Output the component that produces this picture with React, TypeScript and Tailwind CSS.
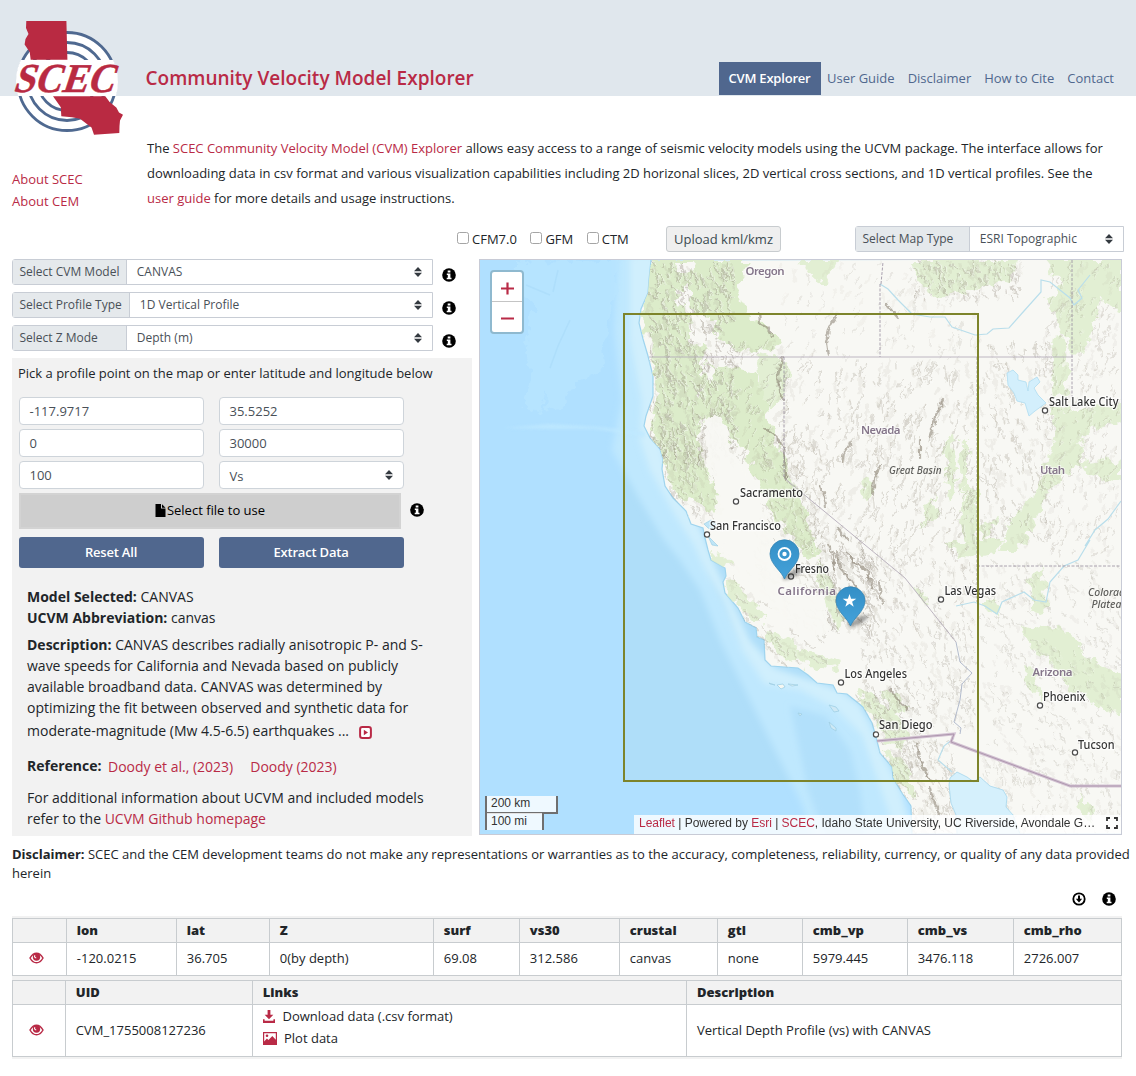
import React from "react";

const NAV = ["User Guide", "Disclaimer", "How to Cite", "Contact"];

/* ---------- icons ---------- */

function InfoIcon({ className = "" }: { className?: string }) {
  return (
    <svg viewBox="0 0 14 14" className={`block size-[14px] shrink-0 ${className}`}>
      <circle cx="7" cy="7" r="6.8" fill="#000" />
      <path d="M5.7 2.4h2.7v2H5.7zM4.8 5.5h3.6v4.3h1.1v1.5H4.7V9.8h1.1V7H4.8z" fill="#fff" />
    </svg>
  );
}

function DownIcon() {
  return (
    <svg viewBox="0 0 14 14" className="block size-[14px]">
      <circle cx="7" cy="7" r="5.7" fill="none" stroke="#000" strokeWidth="1.8" />
      <path d="M6 3.5h2v3.2h2.2L7 10.6 3.8 6.7H6z" fill="#000" />
    </svg>
  );
}

function EyeIcon() {
  return (
    <svg viewBox="0 0 15 12" className="mx-auto block h-[12px] w-[15px]">
      <path d="M1 6C2.8 2.8 5 1.2 7.5 1.2S12.2 2.8 14 6c-1.8 3.2-4 4.8-6.5 4.8S2.8 9.2 1 6z" fill="#fff" stroke="#b92a46" strokeWidth="1.5" />
      <circle cx="7.5" cy="5" r="3.7" fill="#b92a46" />
      <path d="M5.9 3.2c-.8 1.3-.1 2.600 1.300 2.700" fill="none" stroke="#fff" strokeWidth="1.1" />
    </svg>
  );
}

function DownloadIcon() {
  return (
    <svg viewBox="0 0 12 13" className="block h-[13px] w-[12px]" fill="#b92a46">
      <path d="M4.6 0h2.8v4.800h2.900L6 9.300 1.700 4.800h2.900z" />
      <path d="M0 9.200h1.600v1.600h8.800V9.200H12V13H0z" />
    </svg>
  );
}

function PictureIcon() {
  return (
    <svg viewBox="0 0 14 13" className="block h-[13px] w-[14px]">
      <path fillRule="evenodd" d="M0 0h14v13H0zM1.200 1.200v8.300l2.700-3 1.600 1.400L9.300 4l3.500 3.800V1.200z" fill="#b92a46" />
      <circle cx="4" cy="3.8" r="1.3" fill="#b92a46" />
    </svg>
  );
}

function PlayBoxIcon() {
  return (
    <svg viewBox="0 0 13 13" className="ml-[6px] inline-block size-[13px] align-[-2.5px]">
      <rect x="1.1" y="1.1" width="10.8" height="10.8" rx="2.2" fill="#fff" stroke="#b92a46" strokeWidth="2" />
      <path d="M4.8 3.8v5.400L9 6.500z" fill="#b92a46" />
    </svg>
  );
}

function FileIcon() {
  return (
    <svg viewBox="0 0 11 13" className="mr-[1px] block h-[13px] w-[11px]">
      <path d="M.5 0H6v4.600h4.500V13H.5z" fill="#000" />
      <path d="M7 .3l3.500 3.400H7z" fill="#000" />
    </svg>
  );
}

function Caret() {
  return (
    <svg viewBox="0 0 8 10" className="block h-[10px] w-[8px]" fill="#343a40">
      <path d="M4 0l4 4.200H0zM4 10l4-4.200H0z" />
    </svg>
  );
}

function Logo() {
  return (
    <svg viewBox="0 0 122 126" className="absolute top-[14px] left-[8px] h-[126px] w-[122px]">
      <defs>
        <clipPath id="disc"><circle cx="59" cy="67.5" r="51" /></clipPath>
      </defs>
      <circle cx="59" cy="67.5" r="49" fill="#fff" />
      <g fill="none" stroke="#4f6990" strokeWidth="2.8">
        <circle cx="59" cy="67.5" r="49" />
        <circle cx="59" cy="67.5" r="39" />
        <circle cx="59" cy="67.5" r="29" />
      </g>
      <rect x="7" y="46" width="104" height="36" fill="#fff" clipPath="url(#disc)" />
      <path d="M18.300 7H58.400L59.400 45.700H22.700L21.700 38 16.600 30.500 17.500 25 20.500 20 18 14z" fill="#b92a42" />
      <path d="M45 82.300H97.300L101.600 88 108.300 93.500 111 98.500 115 100.700 112 106.500 111.500 112 111.300 119 86 120.800 83.500 113.500 72 104.800 64 103.200 53.300 102.300 52.800 93.300z" fill="#b92a42" />
      <text transform="translate(4.5 77.6) skewX(-18)" textLength="101" lengthAdjust="spacingAndGlyphs" fontFamily="'Liberation Serif', serif" fontWeight="700" fontSize="41" fill="#b92a42" stroke="#b92a42" strokeWidth=".5">
        SCEC
      </text>
    </svg>
  );
}

/* ---------- map ---------- */

const COAST =
  "L651 260 649 280 648 293 641 309 639 323 643 339 648 356 653 376 653 396 646 416 644 426 650 438 660 449 663 459 662 469 665 486 673 498 686 511 691 524 703 528 705 538 708 550 711 560 725 568 726 576 723 582 725 593 738 608 745 622 756 628 757 637 764 640 765 660 771 666 798 668 808 675 817 683 833 685 837 693 847 694 863 707 872 723 876 737 880 753 892 767 893 778 902 793 911 806 912 834";
const LAND = `M1122 259 ${COAST} L1122 834z`;
const SEA = `M480 259 ${COAST} L480 834z`;

const GREENS: string[] = [
  "M649 259 690 259 688 280 680 290 684 312 694 332 712 350 700 358 706 375 698 392 708 408 697 425 700 450 706 470 715 492 722 514 706 508 690 496 680 498 668 486 664 462 652 440 648 425 655 404 654 376 649 352 643 326 641 308z",
  "M688 259 748 259 738 290 748 315 772 330 778 345 752 350 728 344 714 334 716 318 700 318 688 300z",
  "M706 362 734 368 756 374 764 396 768 420 774 440 782 455 790 478 800 500 808 525 816 548 808 560 796 540 780 524 770 508 762 486 750 466 744 450 730 440 724 424 706 420 700 396z",
  "M757 352 778 356 790 372 780 400 768 410 758 384z",
  "M709 552 718 553 730 564 722 568 712 562z",
  "M724 582 734 580 744 592 756 606 764 620 752 618 738 606 728 596z",
  "M764 630 778 632 794 644 812 650 838 660 832 668 808 666 790 660 772 648z",
  "M815 560 826 570 832 588 842 612 838 626 828 616 824 594 814 576z",
  "M858 690 872 694 884 706 900 718 908 736 902 748 888 742 876 724 862 704z",
  "M882 690 896 690 904 706 896 716 886 704z",
  "M885 748 898 756 908 776 918 798 904 790 892 770z",
  "M908 259 1018 259 1010 276 992 286 964 290 940 296 920 286z",
  "M800 259 838 259 826 282 804 272z",
  "M1042 259 1121 259 1121 310 1098 298 1092 330 1084 352 1070 350 1060 322 1046 300 1062 282z",
  "M1052 335 1062 334 1068 372 1066 392 1050 400 1048 372z",
  "M1050 406 1078 410 1121 404 1121 420 1090 430 1078 444 1084 462 1121 458 1121 484 1096 476 1076 462 1058 480 1044 492 1036 520 1018 548 1000 548 1010 520 1034 494 1044 464 1054 440z",
  "M944 440 952 432 956 470 948 500 944 470z",
  "M958 442 966 440 966 480 960 500z",
  "M862 476 868 474 874 496 866 500z",
  "M924 508 934 498 936 512 920 528z",
  "M966 480 977 488 976 540 966 542 958 520z",
  "M978 524 994 520 986 542z",
  "M944 540 1002 540 996 552 960 556z",
  "M1026 582 1040 566 1044 590 1048 606 1034 612z",
  "M1020 622 1038 630 1058 624 1076 640 1090 660 1121 674 1121 716 1098 704 1070 690 1046 656 1024 640z",
  "M984 596 1000 604 994 618 984 606z",
  "M914 586 926 592 930 604 920 600z",
  "M1076 790 1088 806 1094 824 1084 818z",
  "M1024 662 1034 672 1040 700 1026 684z",
];

type Relief = { x: number; y: number; w: number; h: number; n: number; angle: number; len: number; seed: number; dark: number };

const RELIEF: Relief[] = [
  { x: 648, y: 262, w: 85, h: 200, n: 380, angle: 1.2, len: 8, seed: 3, dark: 0.3 },
  { x: 664, y: 440, w: 50, h: 80, n: 80, angle: 1.15, len: 9, seed: 8, dark: 0.24 },
  { x: 700, y: 340, w: 90, h: 120, n: 90, angle: 2.1, len: 8, seed: 12, dark: 0.24 },
  { x: 755, y: 440, w: 65, h: 130, n: 110, angle: 1, len: 9, seed: 15, dark: 0.22 },
  { x: 785, y: 360, w: 190, h: 190, n: 340, angle: 1.85, len: 10, seed: 22, dark: 0.22 },
  { x: 780, y: 262, w: 200, h: 95, n: 90, angle: 1.9, len: 8, seed: 29, dark: 0.13 },
  { x: 910, y: 260, w: 110, h: 35, n: 90, angle: 1.2, len: 6, seed: 31, dark: 0.26 },
  { x: 980, y: 340, w: 75, h: 200, n: 160, angle: 1.3, len: 8, seed: 37, dark: 0.22 },
  { x: 1045, y: 262, w: 74, h: 290, n: 220, angle: 1.9, len: 7, seed: 41, dark: 0.18 },
  { x: 724, y: 560, w: 100, h: 105, n: 80, angle: 0.85, len: 11, seed: 47, dark: 0.22 },
  { x: 820, y: 540, w: 55, h: 85, n: 80, angle: 1.15, len: 13, seed: 53, dark: 0.32 },
  { x: 860, y: 550, w: 115, h: 180, n: 260, angle: 1.3, len: 7, seed: 59, dark: 0.2 },
  { x: 856, y: 685, w: 60, h: 90, n: 90, angle: 1, len: 8, seed: 61, dark: 0.24 },
  { x: 980, y: 560, w: 140, h: 225, n: 300, angle: 1, len: 6, seed: 67, dark: 0.17 },
  { x: 895, y: 740, w: 60, h: 92, n: 80, angle: 1.1, len: 9, seed: 71, dark: 0.22 },
  { x: 990, y: 760, w: 130, h: 74, n: 80, angle: 1.3, len: 6, seed: 79, dark: 0.16 },
];

function reliefPath(r: Relief, offset: number): string {
  let s = r.seed * 7919 + 17;
  const rnd = () => {
    s = (s * 16807) % 2147483647;
    return s / 2147483647;
  };
  let d = "";
  for (let i = 0; i < r.n; i++) {
    const x = r.x + rnd() * r.w;
    const y = r.y + rnd() * r.h;
    const a = r.angle + (rnd() - 0.5) * 0.9;
    const l = r.len * (0.35 + rnd());
    const bend = (rnd() - 0.5) * 5;
    const ex = x + Math.cos(a) * l;
    const ey = y + Math.sin(a) * l;
    d += `M${(x + offset).toFixed(1)} ${y.toFixed(1)}Q${((x + ex) / 2 + bend + offset).toFixed(1)} ${((y + ey) / 2 - bend).toFixed(1)} ${(ex + offset).toFixed(1)} ${ey.toFixed(1)}`;
  }
  return d;
}

const RIDGES = [
  "M838 314 830 326 826 342 828 356",
  "M759 312 760 324 768 328 772 336",
  "M782 358 778 376 780 392 784 400",
  "M943 400 936 416 929 438",
  "M852 442 844 452 842 462",
  "M920 440 920 458",
  "M880 466 874 478 873 494",
  "M820 486 824 496 826 506",
  "M836 552 840 568 850 580 858 590",
  "M828 545 834 556 834 570",
  "M847 552 854 562 868 572 872 588",
  "M879 582 882 604",
  "M916 744 922 764 930 780",
  "M890 690 900 702 908 710",
  "M930 788 934 802 940 814",
  "M848 540 842 534 838 528",
  "M886 304 898 318",
  "M764 428 776 436 784 448 786 480",
];

const CITIES: { name: string; x: number; y: number; tx: number; ty: number; w: number }[] = [
  { name: "Sacramento", x: 736, y: 501.5, tx: 740, ty: 497, w: 63 },
  { name: "San Francisco", x: 707, y: 534.5, tx: 710, ty: 529.5, w: 71 },
  { name: "Fresno", x: 791, y: 576.5, tx: 795, ty: 572.5, w: 34 },
  { name: "Las Vegas", x: 941, y: 599.5, tx: 944.5, ty: 594.5, w: 51.5 },
  { name: "Los Angeles", x: 841, y: 682.5, tx: 844.5, ty: 678, w: 62.5 },
  { name: "San Diego", x: 876, y: 734.5, tx: 879, ty: 729, w: 53.5 },
  { name: "Phoenix", x: 1040, y: 705.5, tx: 1043, ty: 701, w: 42.5 },
  { name: "Tucson", x: 1075, y: 752.5, tx: 1078, ty: 748.5, w: 36.5 },
  { name: "Salt Lake City", x: 1045, y: 410.5, tx: 1049, ty: 405.5, w: 69.5 },
];

const REGIONS: { name: string; x: number; y: number; w: number }[] = [
  { name: "Oregon", x: 745.5, y: 275, w: 39 },
  { name: "Nevada", x: 861, y: 433.5, w: 39.5 },
  { name: "Utah", x: 1040, y: 473.5, w: 25 },
  { name: "California", x: 777.5, y: 595, w: 58.5 },
  { name: "Arizona", x: 1032.5, y: 676, w: 40 },
];

function Pin({ x, y, children }: { x: number; y: number; children: React.ReactNode }) {
  return (
    <g transform={`translate(${x} ${y})`}>
      <ellipse cx="8" cy="-5" rx="11" ry="3.2" transform="rotate(-28 8 -5)" fill="#222" opacity=".4" filter="url(#soft)" />
      <path d="M0 0C-3-8-14.500-15-14.500-25.200A14.500 14 0 0 1 14.500-25.200C14.500-15 3-8 0 0z" fill="url(#pin)" stroke="#3484b4" strokeWidth=".8" />
      {children}
    </g>
  );
}

function MapDrawing() {
  return (
    <svg viewBox="480 260 641 574" className="block h-full w-full">
      <defs>
        <clipPath id="land"><path d={LAND} /></clipPath>
        <clipPath id="sea"><path d={SEA} /></clipPath>
        <filter id="rough" x="-5%" y="-5%" width="110%" height="110%">
          <feTurbulence type="fractalNoise" baseFrequency="0.09" numOctaves="3" seed="4" />
          <feDisplacementMap in="SourceGraphic" scale="17" xChannelSelector="R" yChannelSelector="G" />
        </filter>
        <filter id="wobble" x="-5%" y="-5%" width="110%" height="110%">
          <feTurbulence type="fractalNoise" baseFrequency="0.2" numOctaves="2" seed="9" />
          <feDisplacementMap in="SourceGraphic" scale="6" xChannelSelector="R" yChannelSelector="G" />
          <feGaussianBlur stdDeviation=".5" />
        </filter>
        <filter id="soft" x="-50%" y="-80%" width="200%" height="260%"><feGaussianBlur stdDeviation="1.6" /></filter>
        <filter id="shelf" x="-10%" y="-10%" width="120%" height="120%"><feGaussianBlur stdDeviation="3" /></filter>
        <linearGradient id="pin" x1="0" y1="0" x2="0" y2="1">
          <stop offset="0" stopColor="#348fc6" />
          <stop offset="1" stopColor="#44a2da" />
        </linearGradient>
      </defs>

      <rect x="480" y="260" width="641" height="574" fill="#b0e0ff" />
      <g clipPath="url(#sea)">
        <rect x="624" y="314" width="354" height="467" fill="#afdef9" />
        <path d="M618 256H660V450L700 540 712 580 740 640 770 680 820 690 870 720 920 840H815L800 800 770 740 745 690 720 640 700 590 680 560 664 540 640 500 612 450 622 400 614 330z" fill="#bfe8fe" filter="url(#shelf)" />
        <path d="M790 706 826 716 850 750 860 790 866 840H826L808 790z" fill="#b2e0fb" filter="url(#shelf)" />
        <path d="M630 256H656V330L660 440 668 480 700 528 715 565 750 640 775 668 840 690 860 705 880 750 900 790 912 840H898L876 775 862 735 835 708 800 690 765 684 742 650 722 600 705 570 694 545 672 510 650 470 640 440 642 400 630 340z" fill="#d0effd" filter="url(#shelf)" />
        <path d="M514 262 540 260 620 262 614 300 604 345 606 368 580 380 558 408 546 412 548 372 556 350 552 378 540 412 522 408 530 372 526 340 534 308 520 290z" fill="#bae6ff" opacity=".7" filter="url(#rough)" />
        <path d="M504 428 550 424 600 427 645 432V437L595 429 550 429z" fill="#c0e9ff" opacity=".8" filter="url(#soft)" />
        <path d="M558 270 553 292M570 320 558 346 550 368M526 285 550 295" stroke="#a9daf8" strokeWidth="1.5" fill="none" opacity=".6" />
      </g>

      <path d={LAND} fill="#f8f8f4" stroke="#9fd4ee" strokeWidth="1.2" />
      <g clipPath="url(#land)">
        <g fill="#dcecca" filter="url(#rough)" transform="translate(1 1)">
          {GREENS.map((d, i) => (
            <path key={i} d={d} opacity={i < 3 ? 1 : 0.8} />
          ))}
        </g>
        <g fill="#f8f8f4" filter="url(#rough)">
          <path d="M676 262 692 262 690 272 678 272z" />
          <path d="M676 292 686 290 684 310 676 306z" />
          <path d="M690 332 704 336 706 348 690 344z" />
          <path d="M702 364 714 366 712 380 702 376z" />
          <path d="M718 334 728 340 726 350 718 346z" />
        </g>
        <g fill="none" strokeLinecap="round" filter="url(#wobble)">
          {RELIEF.map((r) => (
            <g key={r.seed}>
              <path d={reliefPath({ ...r, seed: r.seed + 100, n: Math.round(r.n / 2) }, 0)} stroke="#a39a8c" strokeWidth="2.8" opacity={r.dark * 0.5} />
              <path d={reliefPath(r, 1.3)} stroke="#fff" strokeWidth="1.2" opacity={r.dark * 1.2} />
              <path d={reliefPath(r, 0)} stroke="#7f7566" strokeWidth="1.3" opacity={r.dark} />
            </g>
          ))}
          {RIDGES.map((d, i) => (
            <path key={i} d={d} stroke="#7b7162" strokeWidth="2.2" opacity=".5" />
          ))}
        </g>
        <path d="M702 420 718 412 730 436 736 462 752 486 762 506 775 540 792 572 815 596 828 620 820 642 798 634 772 606 744 580 726 552 716 520 712 480z" fill="#f8f8f4" filter="url(#rough)" opacity=".95" />

        <path d="M1007 373 1013 370 1018 375 1018 380 1026 382 1028 391 1029 382 1037 377 1040 382 1034 388 1038 395 1046 403 1035 411 1029 416 1025 403 1017 401 1014 393 1008 385z" fill="#d3effc" stroke="#aedcf0" strokeWidth=".8" />
        <path d="M949 785 950 778 957 772 967 777 974 782 980 777 990 786 1003 790 1007 797 1006 807 1013 815 1020 834H957L956 815 951 803z" fill="#d5f0fc" stroke="#a5d6ec" strokeWidth=".8" />
        <path d="M704 524 711 520 716 524 712 530 708 528zM708 536 718 546 712 545z" fill="#bfe5f7" stroke="#96cae0" strokeWidth=".6" />

        <g fill="none" stroke="#b9deeb" strokeWidth="1.2">
          <path d="M880 284 888 289 898 300 912 314 930 317 945 317 952 327 975 335 987 334 993 329 1009 328 1024 311 1041 292V280L1050 282 1070 298 1074 305 1082 298 1078 290 1090 275" />
          <path d="M1121 501 1108 519 1095 530 1085 546M1090 540 1078 560 1064 566 1050 582 1046 602 1034 600 1024 592 1002 602 997 614 985 606 974 602 956 606" />
          <path d="M938 760 944 746 954 738M938 760 952 772" />
        </g>
        <g fill="none" stroke="#aea5b4" strokeWidth="1" opacity=".8">
          <path d="M649 357H1073M784 478 905 578 956 642" />
          <path d="M784 357V478M880 284V357M977 357V602M977 566H1121M1072 260V398M881 284 883 262" strokeDasharray="3 1.5" stroke="#968c9e" />
          <path d="M956 642 960 662 972 673 962 684 960 700 954 722 961 728 960 734" stroke="#a2adc4" />
        </g>
        <path d="M877 741 954 734 951 742 978 752 1070 786H1121" fill="none" stroke="#d2c1d2" strokeWidth="3" />
        <path d="M877 741 954 734 951 742 978 752 1070 786H1121" fill="none" stroke="#a58da5" strokeWidth=".8" />
      </g>

      <g fill="#f5f7f2" stroke="#9fcfe4" strokeWidth=".8">
        <path d="M769 683 775 685 770 684zM777 685 783 684 785 687 781 689zM788 684 798 685 792 686z" />
        <path d="M798 713 802 714 800 716zM829 705 836 707 839 711 834 712zM829 722 836 728 836 731 831 728z" fill="#cfe9f5" />
      </g>

      <g fontFamily="'Noto Sans', sans-serif" fontWeight="600" fontSize="11.5" fill="#85768a" stroke="#fff" strokeWidth="2" strokeOpacity=".6" paintOrder="stroke">
        {REGIONS.map((r) => (
          <text key={r.name} x={r.x} y={r.y} textLength={r.w}>{r.name}</text>
        ))}
      </g>
      <g fontFamily="'Noto Sans', sans-serif" fontStyle="italic" fontWeight="500" fontSize="11" fill="#5f5f5c">
        <text x="889" y="474" textLength="52.5" lengthAdjust="spacingAndGlyphs">Great Basin</text>
        <text x="1088" y="596" textLength="43" lengthAdjust="spacingAndGlyphs">Colorado</text>
        <text x="1091.5" y="608" textLength="36" lengthAdjust="spacingAndGlyphs">Plateau</text>
      </g>
      {CITIES.map((c) => (
        <g key={c.name}>
          <circle cx={c.x} cy={c.y} r="2.6" fill="#fff" stroke="#4b4b4b" strokeWidth="1.2" />
          <text x={c.tx} y={c.ty} textLength={c.w} lengthAdjust="spacingAndGlyphs" fontFamily="'Noto Sans', sans-serif" fontWeight="500" fontSize="12" fill="#333" stroke="#fff" strokeWidth="2.5" strokeOpacity=".75" paintOrder="stroke">
            {c.name}
          </text>
        </g>
      ))}

      <rect x="624" y="314" width="354" height="467" fill="none" stroke="#7d842b" strokeWidth="2" />

      <Pin x={784.5} y={579}>
        <circle cx="0" cy="-25" r="6" fill="none" stroke="#fff" strokeWidth="1.8" />
        <circle cx="0" cy="-25" r="2.2" fill="#fff" />
      </Pin>
      <Pin x={850.5} y={626}>
        <path d="M-1-32 .6-27.200H5.800L1.600-24.200 3.200-19.200-1-22.200-5.200-19.200-3.600-24.200-7.800-27.200H-2.600z" fill="#fff" />
      </Pin>
    </svg>
  );
}

function MapPanel() {
  return (
    <div className="relative h-[576px] w-[643px] overflow-hidden border border-[#c8cbd6]">
      <MapDrawing />
      <div className="absolute top-[10px] left-[10px] w-[34px] overflow-hidden rounded-[4px] border-2 border-[#8fb9cf] bg-white">
        <div className="grid h-[30px] place-items-center border-b border-[#c4c4c4] pt-[3px]">
          <svg viewBox="0 0 13 13" className="size-[13px]"><path d="M6.500 .5v12M0 6.500h13" stroke="#b92a46" strokeWidth="2.2" /></svg>
        </div>
        <div className="grid h-[30px] place-items-center pt-[2px]">
          <svg viewBox="0 0 13 13" className="size-[13px]"><path d="M0 6.500h13" stroke="#b92a46" strokeWidth="2" /></svg>
        </div>
      </div>
      <div className="absolute bottom-[4px] left-[5px] font-['Liberation_Sans',sans-serif] text-[12px] leading-[14px] text-[#333]">
        <div className="h-[18px] w-[73px] border-2 border-t-0 border-[#6f6f6f] bg-white/80 pl-1">200 km</div>
        <div className="-mt-[1px] h-[17px] w-[59px] border-2 border-t-0 border-b-0 border-[#6f6f6f] bg-white/80 pt-px pl-[4px]">100 mi</div>
      </div>
      <div className="absolute right-0 bottom-0 flex h-[19px] w-[487px] items-center bg-white/80 pl-[5px] font-['Liberation_Sans',sans-serif] text-[12px] whitespace-pre text-[#333]">
        <span className="w-[457px] pb-[3px] tracking-[-0.015px]">
          <span className="text-[#b92a46]">Leaflet</span> | Powered by <span className="text-[#b92a46]">Esri</span> | <span className="text-[#b92a46]">SCEC</span>, Idaho State University, UC Riverside, Avondale G…
        </span>
        <svg viewBox="0 0 12 12" className="mb-[3px] ml-[10px] size-[12px] shrink-0" fill="none" stroke="#333" strokeWidth="1.8">
          <path d="M1 4V1h3M8 1h3v3M11 8v3H8M4 11H1V8" />
        </svg>
      </div>
    </div>
  );
}

/* ---------- form pieces ---------- */

function LabeledSelect({ label, value, labelClass, width }: { label: string; value: string; labelClass: string; width: string }) {
  return (
    <div className={`flex h-[26px] rounded-l-[3px] border border-[#c8cdd5] bg-white text-[12px] text-[#495057] ${width}`}>
      <div className={`flex items-center border-r border-[#c8cdd5] bg-[#e5e9ec] pb-px pl-[6.5px] whitespace-nowrap ${labelClass}`}>{label}</div>
      <div className="flex flex-1 items-center justify-between pr-[10px] pb-px pl-[9.8px]">
        <span>{value}</span>
        <Caret />
      </div>
    </div>
  );
}

function Field({ value, select = false }: { value: string; select?: boolean }) {
  return (
    <div className="flex h-[28px] w-[185px] items-center justify-between rounded-[4px] border border-[#ced4da] bg-white pr-[10px] pl-[9.5px] text-[13px] text-[#495057]">
      <span className={select ? "pt-[3px]" : "pt-[1.5px]"}>{value}</span>
      {select && <Caret />}
    </div>
  );
}

const SELECTORS = [
  ["Select CVM Model", "CANVAS", "w-[114px]"],
  ["Select Profile Type", "1D Vertical Profile", "w-[117px]"],
  ["Select Z Mode", "Depth (m)", "w-[114px]"],
];

function Sidebar() {
  return (
    <div className="w-[467px]">
      <div className="flex flex-col gap-[7px]">
        {SELECTORS.map(([label, value, labelClass]) => (
          <div key={label} className="flex">
            <LabeledSelect label={label} value={value} labelClass={labelClass} width="w-[421px]" />
            <InfoIcon className="mt-[9px] ml-[9px]" />
          </div>
        ))}
      </div>
      <div className="mt-[7px] h-[478px] w-[460px] bg-[#f2f2f2] pl-[7px] text-[#212529]">
        <p className="-ml-[1px] pt-[5px] text-[13px] leading-[20px]">
          <span className="whitespace-nowrap">Pick a profile point on the map or enter latitude and longitude below</span>
        </p>
        <div className="mt-[14px] grid w-[385px] grid-cols-2 gap-x-[15px] gap-y-[4px]">
          <Field value="-117.9717" />
          <Field value="35.5252" />
          <Field value="0" />
          <Field value="30000" />
          <Field value="100" />
          <Field value="Vs" select />
        </div>
        <div className="mt-[4px] flex items-center">
          <div className="flex h-[36px] w-[382px] items-center justify-center border-2 border-[#d3d3d3] bg-[#cecece] pb-px text-[13px] text-black">
            <FileIcon />
            Select file to use
          </div>
          <InfoIcon className="mb-[2px] ml-[9px]" />
        </div>
        <div className="mt-[8px] flex gap-[15px] text-[13px] font-semibold tracking-[-0.2px] text-white">
          <div className="grid h-[31px] w-[185px] place-items-center rounded-[3px] bg-[#50678e] pr-px">Reset All</div>
          <div className="grid h-[31px] w-[185px] place-items-center rounded-[3px] bg-[#50678e] pr-px">Extract Data</div>
        </div>
        <div className="mt-[18px] w-[415px] pl-[8px] text-[14px] leading-[21px] whitespace-nowrap">
          <p><b>Model Selected:</b> CANVAS<br /><b>UCVM Abbreviation:</b> canvas</p>
          <p className="mt-[6px]">
            <b>Description:</b> CANVAS describes radially anisotropic P- and S-<br />
            wave speeds for California and Nevada based on publicly<br />
            available broadband data. CANVAS was determined by<br />
            optimizing the fit between observed and synthetic data for
          </p>
          <p className="mt-[2px]">moderate-magnitude (Mw 4.5-6.5) earthquakes ... <PlayBoxIcon /></p>
          <p className="mt-[14px] flex">
            <b>Reference:</b>
            <span className="ml-[6.5px] pt-px text-[#b92a46]">Doody et al., (2023)</span>
            <span className="ml-[17px] pt-px text-[#b92a46]">Doody (2023)</span>
          </p>
          <p className="mt-[10px]">
            For additional information about UCVM and included models<br />
            refer to the <span className="text-[#b92a46]">UCVM Github homepage</span>
          </p>
        </div>
      </div>
    </div>
  );
}

/* ---------- tables ---------- */

const POINT_COLS = [
  ["", "", "w-[54px]"],
  ["lon", "-120.0215", "w-[110px]"],
  ["lat", "36.705", "w-[93px]"],
  ["Z", "0(by depth)", "w-[164px]"],
  ["surf", "69.08", "w-[86px]"],
  ["vs30", "312.586", "w-[100px]"],
  ["crustal", "canvas", "w-[98px]"],
  ["gtl", "none", "w-[85px]"],
  ["cmb_vp", "5979.445", "w-[105px]"],
  ["cmb_vs", "3476.118", "w-[106px]"],
  ["cmb_rho", "2726.007", "w-[108px]"],
];

const CELL = "border-r border-[#c8cccf]";

function Results() {
  return (
    <div className="mx-[12px] w-[1110px] bg-[#f2f2f2] pt-[2px] pb-[2px] text-[13px] text-[#212529]">
      <div className="border border-r-0 border-[#c8cccf]">
        <div className="flex h-[24px] border-b border-[#c8cccf] font-extrabold">
          {POINT_COLS.map(([h, , w], i) => (
            <div key={i} className={`${CELL} ${w} shrink-0 pl-[9.8px] leading-[22px]`}>{h}</div>
          ))}
        </div>
        <div className="flex h-[32px] bg-white">
          {POINT_COLS.map(([, v, w], i) => (
            <div key={i} className={`${CELL} ${w} flex shrink-0 items-center ${i ? "pb-px pl-[9.8px]" : "pr-[7px] pb-[2px]"}`}>{i ? v : <EyeIcon />}</div>
          ))}
        </div>
      </div>
      <div className="mt-[4px] border border-r-0 border-[#c8cccf]">
        <div className="flex h-[24px] border-b border-[#c8cccf] leading-[22px] font-extrabold">
          <div className={`${CELL} w-[53px]`} />
          <div className={`${CELL} w-[187px] pl-[9.8px]`}>UID</div>
          <div className={`${CELL} w-[434px] pl-[9.8px]`}>Links</div>
          <div className={`${CELL} w-[435px] pl-[10px]`}>Description</div>
        </div>
        <div className="flex h-[51px] bg-white">
          <div className={`${CELL} flex w-[53px] items-center pr-[6px] pb-[2px]`}><EyeIcon /></div>
          <div className={`${CELL} flex w-[187px] items-center pl-[9.8px]`}>CVM_1755008127236</div>
          <div className={`${CELL} w-[434px] pl-[10px] leading-[22px]`}>
            <div className="flex items-center"><DownloadIcon /><span className="ml-[7.5px]">Download data (.csv format)</span></div>
            <div className="flex items-center"><PictureIcon /><span className="ml-[7px]">Plot data</span></div>
          </div>
          <div className={`${CELL} flex w-[435px] items-center pl-[10px]`}>Vertical Depth Profile (vs) with CANVAS</div>
        </div>
      </div>
    </div>
  );
}

/* ---------- page ---------- */

export default function App() {
  return (
    <div className="min-h-[1076px] w-[1136px] overflow-hidden bg-white font-['Open_Sans',sans-serif] text-[13px] text-[#212529]">
      <header className="relative flex h-[96px] items-end bg-[#e0e7ed] pl-[145.5px]">
        <Logo />
        <h1 className="mb-[5px] text-[19px] leading-[26px] font-semibold whitespace-nowrap text-[#b92a46]">Community Velocity Model Explorer</h1>
        <nav className="mr-[22px] mb-px ml-auto flex h-[33px] items-center whitespace-nowrap text-[#50678e]">
          <span className="mr-[6.5px] grid h-[33px] w-[102px] place-items-center bg-[#50678e] font-semibold tracking-[-0.2px] text-white">CVM Explorer</span>
          <span className="flex gap-[13px]">
            {NAV.map((n) => <span key={n}>{n}</span>)}
          </span>
        </nav>
      </header>

      <div className="flex h-[130px] pt-[40px]">
        <div className="w-[147px] pt-[32px] pl-[12px] leading-[22px] text-[#b92a46]">
          <div>About SCEC</div>
          <div>About CEM</div>
        </div>
        <p className="leading-[25px] whitespace-nowrap">
          The <span className="text-[#b92a46]">SCEC Community Velocity Model (CVM) Explorer</span> allows easy access to a range of seismic velocity models using the UCVM package. The interface allows for<br />
          downloading data in csv format and various visualization capabilities including 2D horizonal slices, 2D vertical cross sections, and 1D vertical profiles. See the<br />
          <span className="text-[#b92a46]">user guide</span> for more details and usage instructions.
        </p>
      </div>

      <div className="flex h-[26px] items-center pl-[457px]">
        <div className="flex w-[209px] gap-[13.5px]">
          {["CFM7.0", "GFM", "CTM"].map((n) => (
            <label key={n} className="flex items-center gap-[3px] pt-px">
              <span className="mb-[3px] size-[12px] rounded-[2.5px] border border-[#a5a5a5] bg-white" />
              {n}
            </label>
          ))}
        </div>
        <div className="grid h-[26px] w-[115px] place-items-center rounded-[3px] border border-[#c8cccf] bg-[#efefef] pt-px text-[13px] text-[#3a4a4f]">Upload kml/kmz</div>
        <div className="ml-[74px]">
          <LabeledSelect label="Select Map Type" value="ESRI Topographic" labelClass="w-[114px]" width="w-[269px]" />
        </div>
      </div>

      <div className="mt-[7px] flex pl-[12px]">
        <Sidebar />
        <MapPanel />
      </div>

      <p className="mt-[9px] pl-[12px] leading-[19px] whitespace-nowrap">
        <b>Disclaimer:</b> SCEC and the CEM development teams do not make any representations or warranties as to the accuracy, completeness, reliability, currency, or quality of any data provided<br />herein
      </p>
      <div className="mt-[9px] mb-[10px] flex justify-end gap-[16px] pr-[20px]">
        <DownIcon />
        <InfoIcon />
      </div>
      <Results />
    </div>
  );
}
